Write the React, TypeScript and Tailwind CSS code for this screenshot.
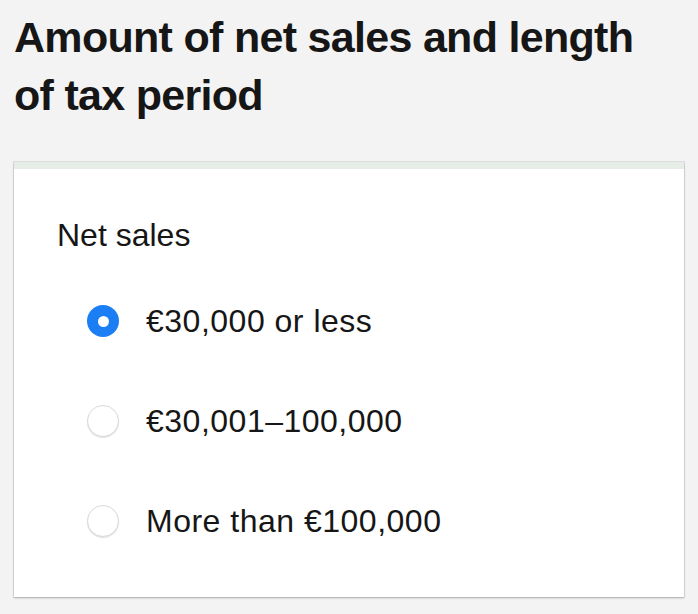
import { useState } from 'react';

const options = ['€30,000 or less', '€30,001–100,000', 'More than €100,000'];

export default function App() {
  const [selected, setSelected] = useState(0);

  return (
    <div className="min-h-[614px] w-[698px] bg-[#f3f3f3] px-[14px] pt-[8px] pb-[16px] font-['Liberation_Sans',sans-serif]">
      <h1 className="max-w-[640px] text-[43px] font-bold leading-[58px] tracking-[-0.7px] text-[#161616]">
        Amount of net sales and length of tax period
      </h1>

      {/* kortti */}
      <div className="mt-[38px] border-t-[7px] border-[#e6ede6] bg-white shadow-[0_1px_2px_rgba(0,0,0,0.25),0_0_0_1px_rgba(0,0,0,0.08)]">
        <div className="px-[43px] pt-[48px] pb-[58px]">
          <div className="text-[32px] leading-[36px] text-[#161616]">Net sales</div>
          <div className="mt-[50px] flex flex-col gap-[64px]">
            {options.map((o, i) => (
              <label key={o} className="flex cursor-pointer items-center gap-[27px] pl-[30px]" onClick={() => setSelected(i)}>
                <span
                  className={
                    i === selected
                      ? 'flex h-[32px] w-[32px] shrink-0 items-center justify-center rounded-full bg-[#1c7ef5]'
                      : 'flex h-[32px] w-[32px] shrink-0 items-center justify-center rounded-full border border-[#dadada] bg-white shadow-[0_1px_1px_rgba(0,0,0,0.12)]'
                  }
                >
                  {i === selected && <span className="h-[11px] w-[11px] rounded-full bg-white" />}
                </span>
                <span className="text-[32px] leading-[36px] tracking-[0.5px] text-[#161616]">{o}</span>
              </label>
            ))}
          </div>
        </div>
      </div>
    </div>
  );
}
